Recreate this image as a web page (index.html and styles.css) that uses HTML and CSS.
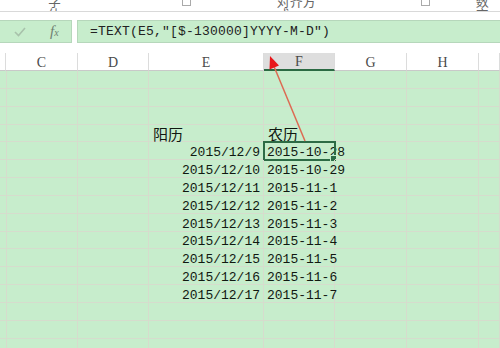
FILE: index.html
```html
<!DOCTYPE html>
<html lang="zh-CN">
<head>
    <meta charset="UTF-8">
    <title>TEXT 农历</title>
    <link rel="stylesheet" href="styles.css">
</head>
<body>

    <!-- Ribbon group labels (cut off at the top) -->
    <div class="ribbon">
        <span class="label label-font">字体</span>
        <span class="launcher launcher-font"></span>
        <span class="label label-align">对齐方式</span>
        <span class="launcher launcher-align"></span>
        <span class="label label-number">数字</span>
    </div>

    <!-- Formula bar -->
    <div class="formula-bar">
        <div class="name-tools">
            <svg class="check" width="12" height="10" viewBox="0 0 12 10">
                <polyline points="1,5 4.5,8.5 11,1" fill="none" stroke="#a8c2ab" stroke-width="1.6"/>
            </svg>
            <span class="fx">f<small>x</small></span>
        </div>
        <div class="formula">=TEXT(E5,"[$-130000]YYYY-M-D")</div>
    </div>

    <!-- Worksheet grid, filled by the script below -->
    <div class="sheet" id="sheet"></div>

    <!-- Red annotation arrow -->
    <svg class="arrow" width="500" height="348" viewBox="0 0 500 348">
        <line x1="305" y1="141" x2="273" y2="64" stroke="#dd6a52" stroke-width="1.5"/>
        <polygon points="270,56 279,65.5 269.5,69.5" fill="#e8161b"/>
    </svg>

    <script>
        const columns = ['', 'C', 'D', 'E', 'F', 'G', 'H', ''];

        // row number -> [E value, F value]
        const data = {
            4: ['阳历', '农历'],
            5: ['2015/12/9', '2015-10-28'],
            6: ['2015/12/10', '2015-10-29'],
            7: ['2015/12/11', '2015-11-1'],
            8: ['2015/12/12', '2015-11-2'],
            9: ['2015/12/13', '2015-11-3'],
            10: ['2015/12/14', '2015-11-4'],
            11: ['2015/12/15', '2015-11-5'],
            12: ['2015/12/16', '2015-11-6'],
            13: ['2015/12/17', '2015-11-7']
        };

        const sheet = document.getElementById('sheet');

        // Column headers
        columns.forEach(function(name) {
            const head = document.createElement('div');
            head.className = name === 'F' ? 'head selected' : 'head';
            head.textContent = name;
            sheet.appendChild(head);
        });

        // Cells
        for (let row = 1; row <= 16; row++) {
            columns.forEach(function(name) {
                const cell = document.createElement('div');
                cell.className = 'cell';
                const values = data[row];
                if (values && (name === 'E' || name === 'F')) {
                    cell.textContent = name === 'E' ? values[0] : values[1];
                    if (row === 4) cell.classList.add('cjk');
                    if (name === 'E' && row > 4) cell.classList.add('date');
                    if (name === 'F' && row === 5) cell.classList.add('active');
                }
                sheet.appendChild(cell);
            });
        }
    </script>

</body>
</html>
```

FILE: styles.css
```css
/* Page */
body {
    margin: 0;
    width: 500px;
    height: 348px;
    overflow: hidden;
    position: relative;
    background: #ffffff;
    font-family: "Liberation Mono", "Noto Sans CJK SC", monospace;
    color: #111811;
}

/* Ribbon labels, only the lower half shows */
.ribbon {
    height: 11px;
    border-bottom: 1px solid #d9d9d9;
    overflow: hidden;
    display: flex;
    align-items: flex-start;
    font-family: "Noto Sans CJK SC", sans-serif;
    font-size: 13px;
    line-height: 13px;
    color: #666;
}

.ribbon .label {
    margin-top: -6px;
}

.label-font { margin-left: 48px; }
.label-align { margin-left: 86px; }
.label-number { margin-left: 46px; }

.launcher {
    width: 7px;
    height: 5px;
    border: 1px solid #aaa;
    border-top: none;
}

.launcher-font { margin-left: 110px; }
.launcher-align { margin-left: 96px; }

/* Formula bar */
.formula-bar {
    display: flex;
    gap: 5px;
    height: 23px;
    margin-top: 8px;
}

.name-tools {
    width: 72px;
    box-sizing: border-box;
    background: #c7edcc;
    border: 1px solid #b6d7bb;
    border-left: none;
    display: flex;
    align-items: center;
}

.check {
    margin-left: 14px;
}

.fx {
    margin-left: 24px;
    font-family: "Liberation Serif", serif;
    font-style: italic;
    font-size: 15px;
    color: #6f7f71;
}

.fx small {
    font-size: 10px;
}

.formula {
    flex: 1;
    box-sizing: border-box;
    background: #c7edcc;
    border: 1px solid #b6d7bb;
    border-right: none;
    padding-left: 12px;
    font-size: 13px;
    letter-spacing: 0.2px;
    line-height: 21px;
    color: #222;
}

/* Worksheet */
.sheet {
    margin-top: 10px;
    display: grid;
    grid-template-columns: 6px 72px 71px 115px 71px 72px 72px 21px;
    grid-template-rows: 18px;
    grid-auto-rows: 17.85px;
    background: linear-gradient(#fff, #fff) top / 100% 18px no-repeat, #c7edcc;
}

.head {
    box-sizing: border-box;
    border-right: 1px solid #dcdcdc;
    border-bottom: 1px solid #c9c9c9;
    text-align: center;
    font-family: "Liberation Serif", serif;
    font-size: 14px;
    line-height: 19px;
    color: #4a4a4a;
}

.head.selected {
    background: #dedede;
    border-bottom: 2px solid #2b6a43;
    line-height: 18px;
}

.cell {
    box-sizing: border-box;
    border-right: 1px solid #d6dccd;
    border-bottom: 1px solid #d6dccd;
    display: flex;
    align-items: flex-end;
    padding: 0 3px;
    font-size: 13px;
    line-height: 13px;
    white-space: nowrap;
    position: relative;
}

.cell.date {
    justify-content: flex-end;
}

.cell.cjk {
    font-family: "Noto Sans CJK SC", sans-serif;
    font-size: 15px;
    padding-left: 4px;
    line-height: 14px;
}

/* Selected cell with fill handle */
.cell.active {
    outline: 2px solid #2d6b45;
    outline-offset: -1px;
}

.cell.active::after {
    content: "";
    position: absolute;
    right: -3px;
    bottom: -3px;
    width: 5px;
    height: 5px;
    background: #2d6b45;
    border: 1px solid #c7edcc;
}

/* Annotation arrow */
.arrow {
    position: absolute;
    top: 0;
    left: 0;
    pointer-events: none;
}
```
